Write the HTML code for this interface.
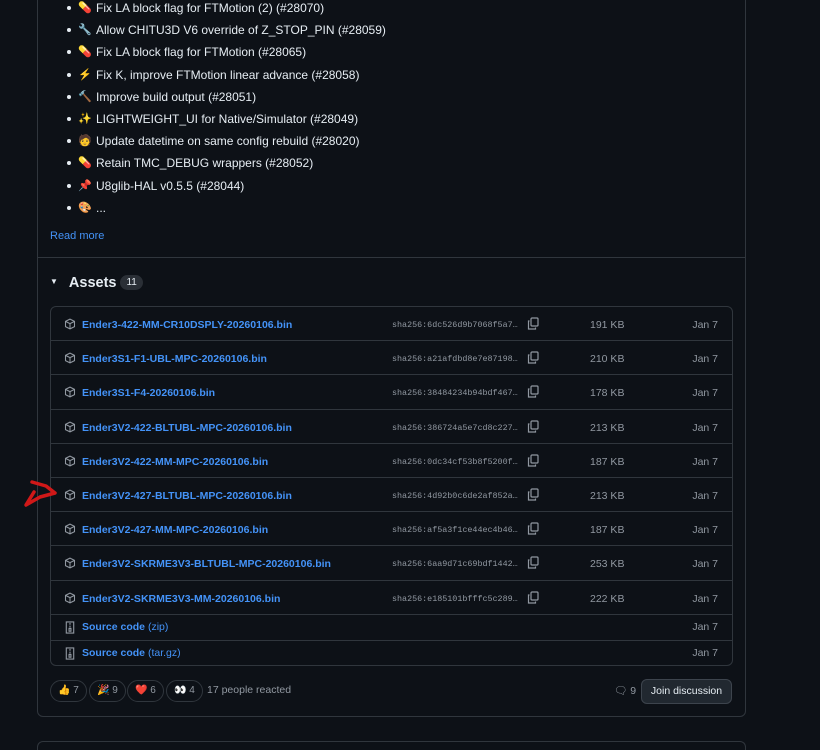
<!DOCTYPE html>
<html><head><meta charset="utf-8"><style>
*{box-sizing:border-box;margin:0;padding:0}
html,body{width:820px;height:750px;overflow:hidden}
body{background:#0d1117;font-family:"Liberation Sans","Noto Sans CJK SC",sans-serif;color:#e6edf3;position:relative}
.card{position:absolute;left:37px;top:-10px;width:709px;height:727px;border:1px solid #30363d;border-radius:6px}
.card2{position:absolute;left:37px;top:741px;width:709px;height:9px;border:1px solid #30363d;border-bottom:none;border-radius:6px 6px 0 0}
ul{position:absolute;left:67px;top:0;list-style:none}
li{height:22.2px;font-size:12px;line-height:16px;white-space:nowrap;position:relative;padding-left:29px}
li:before{content:"";position:absolute;left:0;top:6px;width:4px;height:4px;border-radius:50%;background:#e6edf3}
li i{position:absolute;left:11px;top:0;font-style:normal;font-size:11px}
.rm{position:absolute;left:50px;top:230px;font-size:11px;color:#4493f8}
.sep{position:absolute;left:38px;top:257px;width:707px;height:1px;background:#30363d}
.ah{position:absolute;left:50px;top:275px;font-size:14.5px;font-weight:bold}
.ah span.t{font-size:8px;position:relative;top:-3px;margin-right:11px}
.cnt{display:inline-block;background:#2a2f36;border-radius:10px;font-size:10px;font-weight:normal;padding:2px 6px;margin-left:4px;vertical-align:2px}
.tbl{position:absolute;left:50px;top:306px;width:683px;height:360px;border:1px solid #30363d;border-radius:6px;overflow:hidden}
.row{position:relative;height:34.2px;border-bottom:1px solid #30363d;font-size:10.5px}
.row.s{height:26px}
.row:last-child{border-bottom:none}
.ic{position:absolute;left:13px;top:11px}
.nm{position:absolute;left:31px;top:12px;color:#4493f8;font-weight:bold}
.s .nm,.s .ic{top:6px}
.nm em{font-style:normal;font-weight:normal}
.sha{position:absolute;left:341px;top:13px;font-family:"Liberation Mono",monospace;font-size:8.4px;color:#9198a1}
.cp{position:absolute;left:476px;top:10px}
.sz{position:absolute;left:539px;top:12px;color:#9198a1}
.dt{position:absolute;right:14px;top:12px;color:#9198a1}
.s .dt{top:6px}
.re{position:absolute;top:680px;height:22px;border:1px solid #30363d;border-radius:11px;font-size:10px;color:#9198a1;line-height:20px;padding:0 7px}
.pr{position:absolute;left:207px;top:684px;font-size:10.5px;color:#9198a1}
.jd{position:absolute;left:641px;top:679px;width:91px;height:25px;background:#212830;border:1px solid #3d444d;border-radius:6px;font-size:10.5px;line-height:23px;text-align:center}
.cm{position:absolute;left:614px;top:684px;font-size:10.5px;color:#9198a1}
</style></head><body>
<div class="card"></div><div class="card2"></div>
<ul>
<li><i>💊</i>Fix LA block flag for FTMotion (2) (#28070)</li>
<li><i>🔧</i>Allow CHITU3D V6 override of Z_STOP_PIN (#28059)</li>
<li><i>💊</i>Fix LA block flag for FTMotion (#28065)</li>
<li><i>⚡</i>Fix K, improve FTMotion linear advance (#28058)</li>
<li><i>🔨</i>Improve build output (#28051)</li>
<li><i>✨</i>LIGHTWEIGHT_UI for Native/Simulator (#28049)</li>
<li><i>🧑</i>Update datetime on same config rebuild (#28020)</li>
<li><i>💊</i>Retain TMC_DEBUG wrappers (#28052)</li>
<li><i>📌</i>U8glib-HAL v0.5.5 (#28044)</li>
<li><i>🎨</i>...</li>
</ul>
<div class="rm">Read more</div>
<div class="sep"></div>
<div class="ah"><span class="t">▼</span>Assets<span class="cnt">11</span></div>
<div class="tbl">
<div class="row"><svg class="ic" width="12" height="12" viewBox="0 0 16 16" fill="none" stroke="#9198a1" stroke-width="1.4"><path d="M8 1.5l6 3v7l-6 3-6-3v-7zM2 4.5l6 3 6-3M8 7.5v7"/></svg><span class="nm">Ender3-422-MM-CR10DSPLY-20260106.bin</span><span class="sha">sha256:6dc526d9b7068f5a7…</span><svg class="cp" width="12" height="13" viewBox="0 0 12 13" fill="none" stroke="#9198a1" stroke-width="1.2"><rect x="4" y="1" width="7" height="8" rx="1"/><path d="M2.5 4H1.5v8h7V10.5"/></svg><span class="sz">191 KB</span><span class="dt">Jan 7</span></div>
<div class="row"><svg class="ic" width="12" height="12" viewBox="0 0 16 16" fill="none" stroke="#9198a1" stroke-width="1.4"><path d="M8 1.5l6 3v7l-6 3-6-3v-7zM2 4.5l6 3 6-3M8 7.5v7"/></svg><span class="nm">Ender3S1-F1-UBL-MPC-20260106.bin</span><span class="sha">sha256:a21afdbd8e7e87198…</span><svg class="cp" width="12" height="13" viewBox="0 0 12 13" fill="none" stroke="#9198a1" stroke-width="1.2"><rect x="4" y="1" width="7" height="8" rx="1"/><path d="M2.5 4H1.5v8h7V10.5"/></svg><span class="sz">210 KB</span><span class="dt">Jan 7</span></div>
<div class="row"><svg class="ic" width="12" height="12" viewBox="0 0 16 16" fill="none" stroke="#9198a1" stroke-width="1.4"><path d="M8 1.5l6 3v7l-6 3-6-3v-7zM2 4.5l6 3 6-3M8 7.5v7"/></svg><span class="nm">Ender3S1-F4-20260106.bin</span><span class="sha">sha256:38484234b94bdf467…</span><svg class="cp" width="12" height="13" viewBox="0 0 12 13" fill="none" stroke="#9198a1" stroke-width="1.2"><rect x="4" y="1" width="7" height="8" rx="1"/><path d="M2.5 4H1.5v8h7V10.5"/></svg><span class="sz">178 KB</span><span class="dt">Jan 7</span></div>
<div class="row"><svg class="ic" width="12" height="12" viewBox="0 0 16 16" fill="none" stroke="#9198a1" stroke-width="1.4"><path d="M8 1.5l6 3v7l-6 3-6-3v-7zM2 4.5l6 3 6-3M8 7.5v7"/></svg><span class="nm">Ender3V2-422-BLTUBL-MPC-20260106.bin</span><span class="sha">sha256:386724a5e7cd8c227…</span><svg class="cp" width="12" height="13" viewBox="0 0 12 13" fill="none" stroke="#9198a1" stroke-width="1.2"><rect x="4" y="1" width="7" height="8" rx="1"/><path d="M2.5 4H1.5v8h7V10.5"/></svg><span class="sz">213 KB</span><span class="dt">Jan 7</span></div>
<div class="row"><svg class="ic" width="12" height="12" viewBox="0 0 16 16" fill="none" stroke="#9198a1" stroke-width="1.4"><path d="M8 1.5l6 3v7l-6 3-6-3v-7zM2 4.5l6 3 6-3M8 7.5v7"/></svg><span class="nm">Ender3V2-422-MM-MPC-20260106.bin</span><span class="sha">sha256:0dc34cf53b8f5200f…</span><svg class="cp" width="12" height="13" viewBox="0 0 12 13" fill="none" stroke="#9198a1" stroke-width="1.2"><rect x="4" y="1" width="7" height="8" rx="1"/><path d="M2.5 4H1.5v8h7V10.5"/></svg><span class="sz">187 KB</span><span class="dt">Jan 7</span></div>
<div class="row"><svg class="ic" width="12" height="12" viewBox="0 0 16 16" fill="none" stroke="#9198a1" stroke-width="1.4"><path d="M8 1.5l6 3v7l-6 3-6-3v-7zM2 4.5l6 3 6-3M8 7.5v7"/></svg><span class="nm">Ender3V2-427-BLTUBL-MPC-20260106.bin</span><span class="sha">sha256:4d92b0c6de2af852a…</span><svg class="cp" width="12" height="13" viewBox="0 0 12 13" fill="none" stroke="#9198a1" stroke-width="1.2"><rect x="4" y="1" width="7" height="8" rx="1"/><path d="M2.5 4H1.5v8h7V10.5"/></svg><span class="sz">213 KB</span><span class="dt">Jan 7</span></div>
<div class="row"><svg class="ic" width="12" height="12" viewBox="0 0 16 16" fill="none" stroke="#9198a1" stroke-width="1.4"><path d="M8 1.5l6 3v7l-6 3-6-3v-7zM2 4.5l6 3 6-3M8 7.5v7"/></svg><span class="nm">Ender3V2-427-MM-MPC-20260106.bin</span><span class="sha">sha256:af5a3f1ce44ec4b46…</span><svg class="cp" width="12" height="13" viewBox="0 0 12 13" fill="none" stroke="#9198a1" stroke-width="1.2"><rect x="4" y="1" width="7" height="8" rx="1"/><path d="M2.5 4H1.5v8h7V10.5"/></svg><span class="sz">187 KB</span><span class="dt">Jan 7</span></div>
<div class="row"><svg class="ic" width="12" height="12" viewBox="0 0 16 16" fill="none" stroke="#9198a1" stroke-width="1.4"><path d="M8 1.5l6 3v7l-6 3-6-3v-7zM2 4.5l6 3 6-3M8 7.5v7"/></svg><span class="nm">Ender3V2-SKRME3V3-BLTUBL-MPC-20260106.bin</span><span class="sha">sha256:6aa9d71c69bdf1442…</span><svg class="cp" width="12" height="13" viewBox="0 0 12 13" fill="none" stroke="#9198a1" stroke-width="1.2"><rect x="4" y="1" width="7" height="8" rx="1"/><path d="M2.5 4H1.5v8h7V10.5"/></svg><span class="sz">253 KB</span><span class="dt">Jan 7</span></div>
<div class="row"><svg class="ic" width="12" height="12" viewBox="0 0 16 16" fill="none" stroke="#9198a1" stroke-width="1.4"><path d="M8 1.5l6 3v7l-6 3-6-3v-7zM2 4.5l6 3 6-3M8 7.5v7"/></svg><span class="nm">Ender3V2-SKRME3V3-MM-20260106.bin</span><span class="sha">sha256:e185101bfffc5c289…</span><svg class="cp" width="12" height="13" viewBox="0 0 12 13" fill="none" stroke="#9198a1" stroke-width="1.2"><rect x="4" y="1" width="7" height="8" rx="1"/><path d="M2.5 4H1.5v8h7V10.5"/></svg><span class="sz">222 KB</span><span class="dt">Jan 7</span></div>
<div class="row s"><svg class="ic" width="12" height="13" viewBox="0 0 12 14" fill="none" stroke="#9198a1" stroke-width="1.2"><path d="M2 1h8v12H2zM6 2v2M6 5v2M5 8h2v3H5z"/></svg><span class="nm">Source code <em>(zip)</em></span><span class="dt">Jan 7</span></div>
<div class="row s"><svg class="ic" width="12" height="13" viewBox="0 0 12 14" fill="none" stroke="#9198a1" stroke-width="1.2"><path d="M2 1h8v12H2zM6 2v2M6 5v2M5 8h2v3H5z"/></svg><span class="nm">Source code <em>(tar.gz)</em></span><span class="dt">Jan 7</span></div>
</div>
<div class="re" style="left:50px">👍 7</div>
<div class="re" style="left:89px">🎉 9</div>
<div class="re" style="left:127px">❤️ 6</div>
<div class="re" style="left:166px">👀 4</div>
<div class="pr">17 people reacted</div>
<div class="cm">🗨 9</div>
<div class="jd">Join discussion</div>
<svg style="position:absolute;left:0;top:0" width="820" height="750"><path d="M32 482 L46 486 L55 493 L40 497 L26 505 L34 492" fill="none" stroke="#d01818" stroke-width="3.5" stroke-linecap="round" stroke-linejoin="round"/></svg>
</body></html>
